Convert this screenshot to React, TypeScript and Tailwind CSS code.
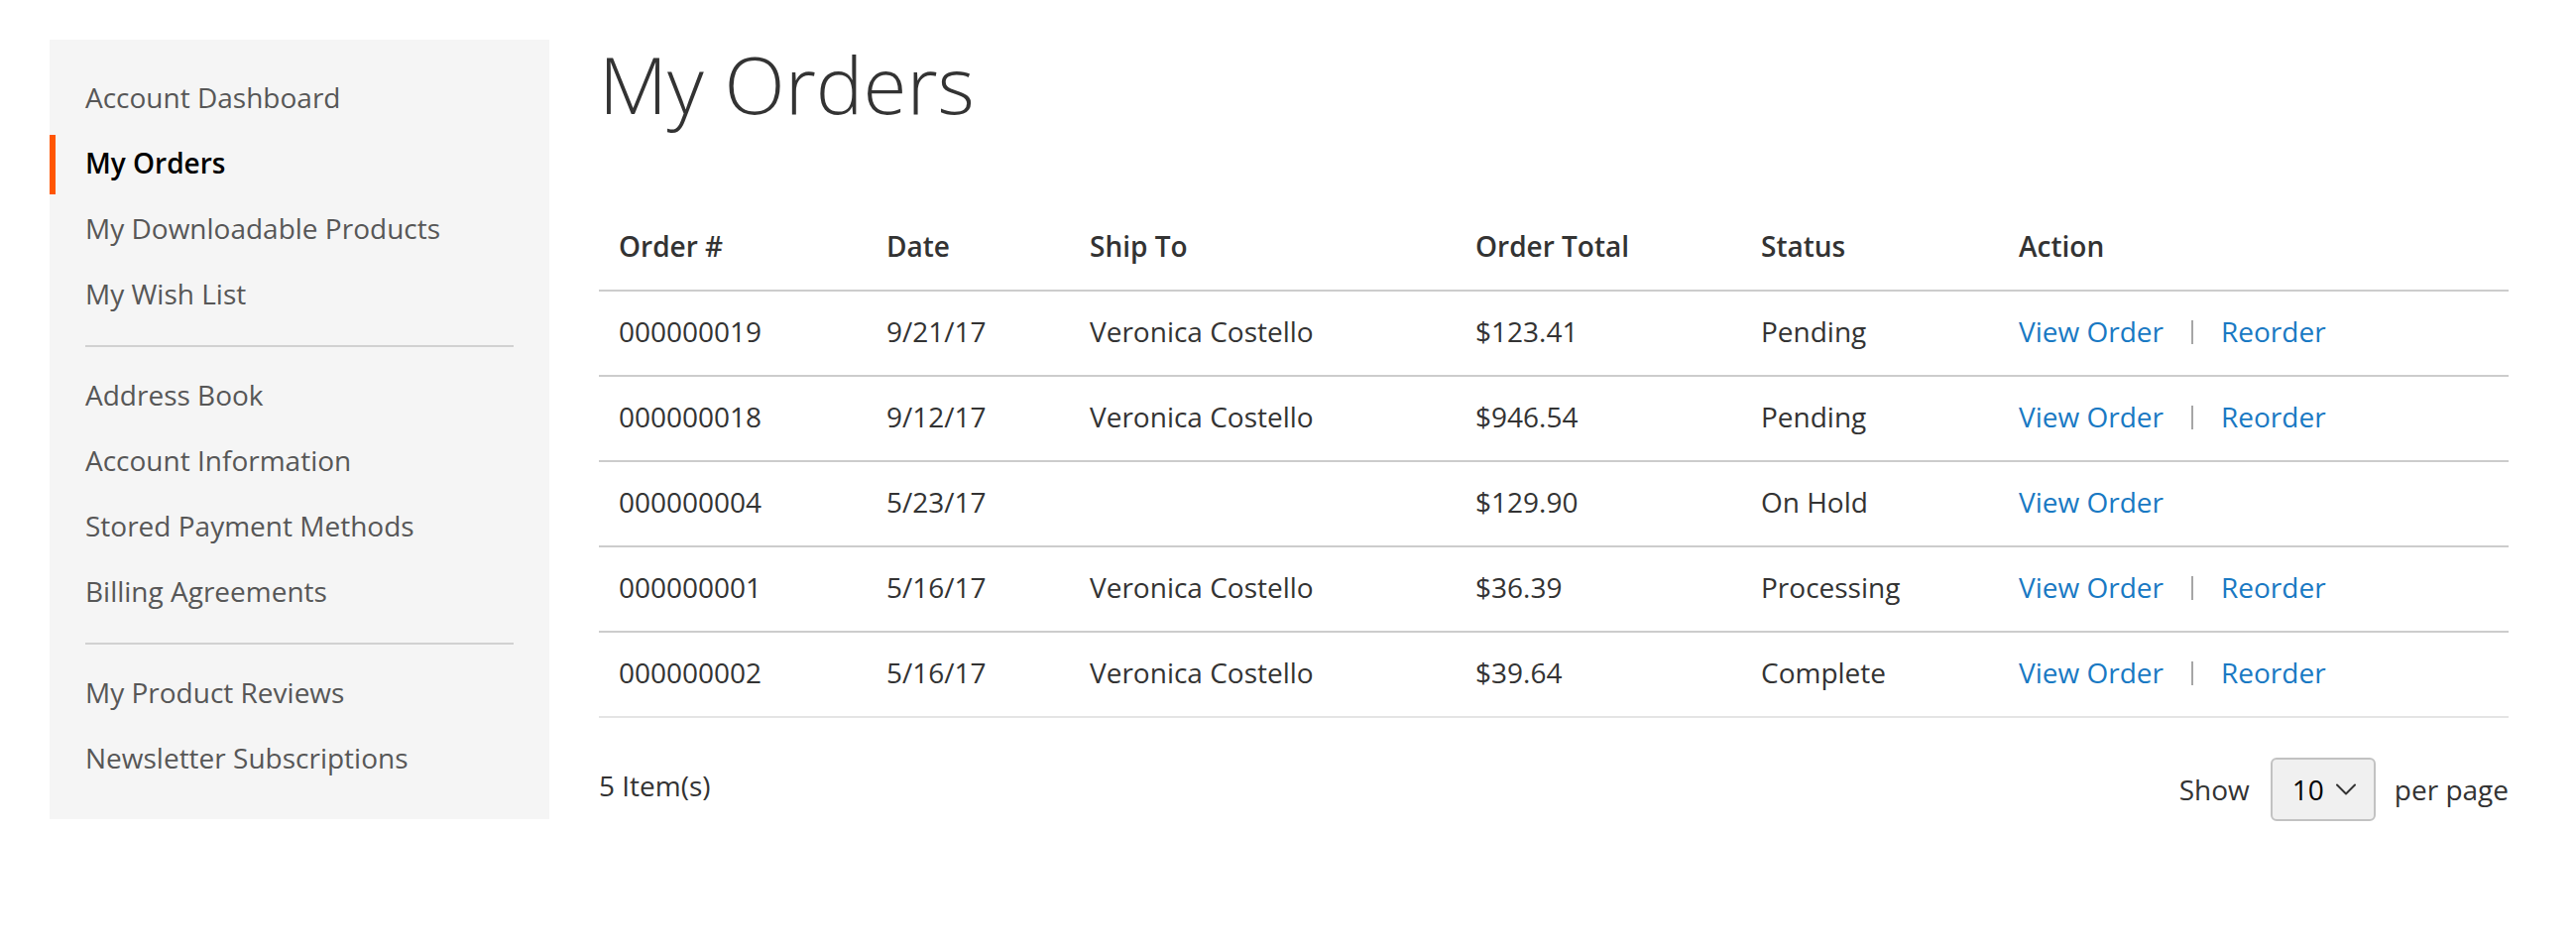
import React from "react";

const groups: { label: string; active?: boolean }[][] = [
  [
    { label: "Account Dashboard" },
    { label: "My Orders", active: true },
    { label: "My Downloadable Products" },
    { label: "My Wish List" },
  ],
  [
    { label: "Address Book" },
    { label: "Account Information" },
    { label: "Stored Payment Methods" },
    { label: "Billing Agreements" },
  ],
  [{ label: "My Product Reviews" }, { label: "Newsletter Subscriptions" }],
];

const orders = [
  { id: "000000019", date: "9/21/17", ship: "Veronica Costello", total: "$123.41", status: "Pending", reorder: true },
  { id: "000000018", date: "9/12/17", ship: "Veronica Costello", total: "$946.54", status: "Pending", reorder: true },
  { id: "000000004", date: "5/23/17", ship: "", total: "$129.90", status: "On Hold", reorder: false },
  { id: "000000001", date: "5/16/17", ship: "Veronica Costello", total: "$36.39", status: "Processing", reorder: true },
  { id: "000000002", date: "5/16/17", ship: "Veronica Costello", total: "$39.64", status: "Complete", reorder: true },
];

function Sidebar() {
  return (
    <div className="w-[504px] shrink-0 self-start bg-[#f5f5f5] py-[30px]">
      {groups.map((g, gi) => (
        <React.Fragment key={gi}>
          {gi > 0 && <div className="mx-[36px] my-[20px] h-[2px] bg-[#d1d1d1]" />}
          <div className="flex flex-col gap-[6px]">
            {g.map((item) => (
              <div
                key={item.label}
                className={
                  item.active
                    ? "h-[60px] border-l-[6px] border-[#ff5501] pt-[8px] pb-[12px] pl-[30px] text-[28px] leading-[40px] font-semibold text-black"
                    : "h-[60px] border-l-[6px] border-transparent pt-[8px] pb-[12px] pl-[30px] text-[28px] leading-[40px] text-[#575757]"
                }
              >
                {item.label}
              </div>
            ))}
          </div>
        </React.Fragment>
      ))}
    </div>
  );
}

function Chevron() {
  return (
    <svg width="20" height="12" viewBox="0 0 20 12" fill="none">
      <polyline points="1,1.5 10,10.5 19,1.5" stroke="#333333" strokeWidth="2" strokeLinecap="round" strokeLinejoin="round" />
    </svg>
  );
}

export default function App() {
  const th = "px-[20px] pt-[20px] pb-[24px] text-left text-[28px] leading-[40px] font-semibold text-[#333]";
  const td = "px-[20px] pt-[20px] pb-[24px] text-[28px] leading-[40px] text-[#333] align-top";
  return (
    <div
      className="min-h-[960px] bg-white pl-[50px] pt-[40px]"
      style={{ fontFamily: '"Open Sans", "Noto Sans", "Liberation Sans", sans-serif' }}
    >
      <div className="flex">
        <Sidebar />
        <div className="ml-[50px] w-[1926px]">
          <h1 className="text-[80px] leading-[88px] font-light text-[#333]">My Orders</h1>
          <table className="mt-[80px] w-full table-fixed border-collapse">
            <colgroup>
              <col className="w-[270px]" />
              <col className="w-[205px]" />
              <col className="w-[389px]" />
              <col className="w-[288px]" />
              <col className="w-[260px]" />
              <col className="w-[514px]" />
            </colgroup>
            <thead>
              <tr className="border-b-2 border-[#cccccc]">
                <th className={th}>Order #</th>
                <th className={th}>Date</th>
                <th className={th}>Ship To</th>
                <th className={th}>Order Total</th>
                <th className={th}>Status</th>
                <th className={th}>Action</th>
              </tr>
            </thead>
            <tbody>
              {orders.map((o, i) => (
                <tr
                  key={o.id}
                  className={i === orders.length - 1 ? "border-b-2 border-[#e4e4e4]" : "border-b-2 border-[#cccccc]"}
                >
                  <td className={td}>{o.id}</td>
                  <td className={td}>{o.date}</td>
                  <td className={td}>{o.ship}</td>
                  <td className={td}>{o.total}</td>
                  <td className={td}>{o.status}</td>
                  <td className={td}>
                    <span className="inline-flex items-baseline">
                      <span className="text-[#1979c3]">View Order</span>
                      {o.reorder && (
                        <>
                          <span className="relative top-[2px] mx-[28px] inline-block h-[24px] w-[2px] bg-[#a6a6a6]" />
                          <span className="text-[#1979c3]">Reorder</span>
                        </>
                      )}
                    </span>
                  </td>
                </tr>
              ))}
            </tbody>
          </table>
          <div className="mt-[40px] flex items-start justify-between">
            <div className="pt-[8px] text-[28px] leading-[40px] text-[#333]">5 Item(s)</div>
            <div className="flex h-[64px] items-center text-[28px] leading-[40px] text-[#333]">
              <span>Show</span>
              <div className="ml-[21px] mr-[19px] flex h-[64px] w-[106px] items-center justify-between rounded-[6px] border-2 border-[#c2c2c2] bg-[#f0f0f0] pl-[20px] pr-[18px]">
                <span className="text-black">10</span>
                <Chevron />
              </div>
              <span>per page</span>
            </div>
          </div>
        </div>
      </div>
    </div>
  );
}
